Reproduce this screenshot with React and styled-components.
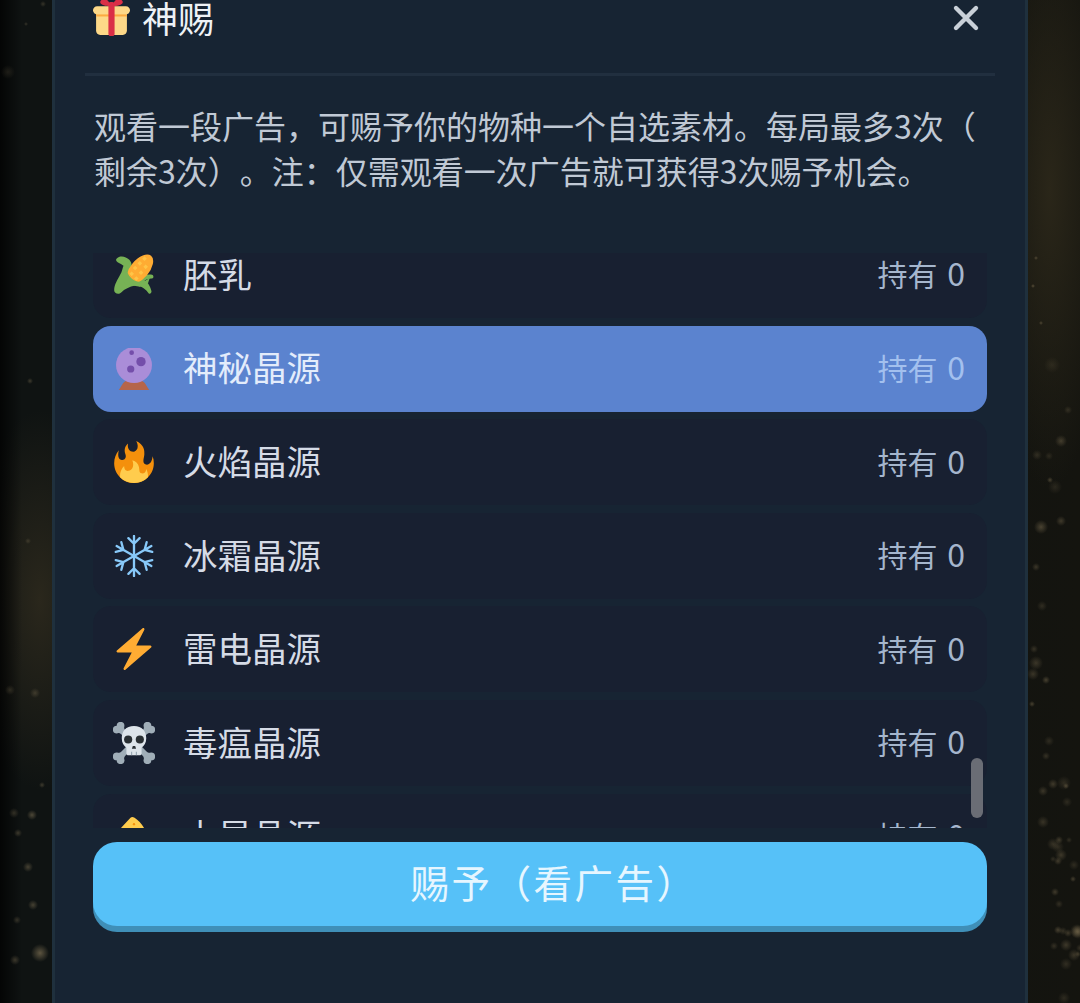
import React from "react";
import styled, { createGlobalStyle } from "styled-components";

const Global = createGlobalStyle`
  html, body { margin: 0; height: 100%; overflow: hidden; background: #0a0c0b; }
  #root { height: 100%; }
`;

const leftSpecks = [
  [32, 815, 5, 0.4], [18, 833, 4, 0.3], [28, 867, 5, 0.35], [33, 905, 5, 0.35], [40, 953, 9, 0.5],
  [15, 960, 5, 0.3], [14, 813, 5, 0.25], [17, 920, 4, 0.25], [42, 785, 3, 0.3], [30, 381, 3, 0.3],
  [28, 541, 3, 0.22], [10, 690, 5, 0.2], [35, 693, 5, 0.25], [8, 72, 7, 0.14], [26, 24, 2, 0.25], [43, 4, 3, 0.25],
];

const rightSpecks = [];
let seed = 7;
const rand = () => {
  seed = (seed * 16807) % 2147483647;
  return seed / 2147483647;
};
for (let i = 0; i < 46; i += 1) {
  const y = 410 + rand() * 590;
  const curve = y < 640 ? 1055 - (y - 410) * 0.07 : 1040 + (y - 640) * 0.09;
  rightSpecks.push([Math.round(curve + (rand() - 0.5) * 30), Math.round(y), 3 + Math.round(rand() * 4), 0.14 + rand() * 0.22]);
}
[[1036, 258, 2, 0.35], [1033, 286, 2, 0.4], [1041, 323, 2, 0.35], [1052, 365, 8, 0.12]].forEach((s) => rightSpecks.push(s));

const speckLayers = [...leftSpecks, ...rightSpecks]
  .map(([x, y, r, a]) => `radial-gradient(circle ${r}px at ${x}px ${y}px, rgba(170,150,110,${a}), rgba(170,150,110,0))`)
  .join(", ");

const Backdrop = styled.div`
  height: 100%;
  display: flex;
  justify-content: center;
  overflow: hidden;
  background:
    ${speckLayers},
    linear-gradient(90deg, rgba(0, 0, 0, 0.75) 0, rgba(0, 0, 0, 0) 22px),
    radial-gradient(ellipse 70px 190px at 40px 600px, #2a271c, rgba(42, 39, 28, 0)),
    radial-gradient(ellipse 60px 300px at 1050px 190px, #2a2619, rgba(42, 38, 25, 0)),
    linear-gradient(90deg, #0f1312 0, #0f1312 50%, #14140f 100%);
`;

const Panel = styled.main`
  box-sizing: border-box;
  width: 976px;
  height: 100%;
  padding: 0 30px;
  background: #172433;
  border-left: 3px solid #1f303d;
  border-right: 3px solid #1f303d;
  font-family: "Noto Sans CJK SC", "Noto Sans", sans-serif;
  text-spacing-trim: space-all;
  display: flex;
  flex-direction: column;
  overflow: hidden;
`;

const Header = styled.header`
  height: 73px;
  flex: none;
  display: flex;
  align-items: flex-start;
  justify-content: space-between;
  border-bottom: 3px solid #212f3f;
  padding: 0 15px 0 8px;
`;

const TitleWrap = styled.div`
  display: flex;
  align-items: center;
  gap: 12px;
  height: 36px;
`;

const Title = styled.h1`
  margin: -2px 0 0;
  font-size: 36px;
  line-height: 36px;
  font-weight: 400;
  color: #eef2f6;
`;

const CloseIcon = styled.svg`
  width: 28px;
  height: 28px;
  margin-top: 4px;
  display: block;
`;

const Body = styled.div`
  margin: 0 8px;
  display: flex;
  flex-direction: column;
  flex: none;
`;

const Description = styled.p`
  margin: 27px 0 0;
  font-size: 32px;
  line-height: 44.6px;
  color: #c0c9d5;
  padding-left: 1px;
  white-space: nowrap;
`;

const ListFrame = styled.div`
  position: relative;
  margin-top: 60.8px;
  height: 575px;
  overflow: hidden;
`;

const List = styled.ul`
  list-style: none;
  margin: -21px 0 0;
  padding: 0;
  display: flex;
  flex-direction: column;
  gap: 7.6px;
`;

const Row = styled.li`
  height: 86px;
  flex: none;
  box-sizing: border-box;
  display: flex;
  align-items: center;
  padding: 0 22px 0 20px;
  border-radius: 18px;
  background: ${(p) => (p.$active ? "#5b83cf" : "#182031")};
`;

const RowIcon = styled.svg`
  width: 42px;
  height: 42px;
  flex: none;
  display: block;
`;

const RowName = styled.span`
  margin-left: 28px;
  flex: 1;
  font-size: 34.5px;
  line-height: 1;
  padding-bottom: 4px;
  color: ${(p) => (p.$active ? "#e3ecfb" : "#d5dbe6")};
`;

const RowCount = styled.span`
  font-size: 30px;
  line-height: 1;
  padding-bottom: 5px;
  word-spacing: 3px;
  color: ${(p) => (p.$active ? "#a3c0ee" : "#a5b6cd")};
`;

const CountValue = styled.span`
  display: inline-block;
  font-size: 32px;
`;

const ScrollThumb = styled.div`
  position: absolute;
  right: 4px;
  top: 505px;
  width: 12px;
  height: 60px;
  border-radius: 6px;
  background: #6a6d75;
`;

const GrantButton = styled.button`
  margin-top: 14px;
  height: 84px;
  border: 0;
  padding: 0 0 6px 28px;
  border-radius: 24px;
  background: #56c1f8;
  box-shadow: 0 6px 0 #3f8fb8;
  color: #e6f6ff;
  font-family: inherit;
  font-size: 38.5px;
  font-weight: 400;
  line-height: 1;
  letter-spacing: 2.5px;
  text-spacing-trim: space-all;
`;

const Svg36 = ({ children }) => <RowIcon viewBox="0 0 36 36">{children}</RowIcon>;

const GiftSvg = styled.svg`
  width: 37px;
  height: 37px;
  flex: none;
  display: block;
  margin-top: -2px;
`;

const Gift = () => (
  <GiftSvg viewBox="0 0 36 36">
    <path fill="#FDD888" d="M33 31c0 2.2-1.8 4-4 4H7c-2.2 0-4-1.8-4-4V14c0-2.2 1.8-4 4-4h22c2.2 0 4 1.8 4 4v17z" />
    <path fill="#FDD888" d="M36 11c0 2.2-1.8 4-4 4H4c-2.2 0-4-1.8-4-4s1.8-4 4-4h28c2.2 0 4 1.8 4 4z" />
    <path fill="#FCAB40" d="M3 15h30v2H3z" />
    <path fill="#DA2F47" d="M19 3h-2c-1.1 0-2 .9-2 2v29c0 1.1.9 2 2 2h2c1.1 0 2-.9 2-2V5c0-1.1-.9-2-2-2z" />
    <path fill="#DA2F47" d="M16 7c1.1 0 1.1-.9.6-2-.5-1.1-2.6-5-5.1-5-2.2 0-4.5 1.2-4.5 3 0 3.3 6.6 4 9 4zm4 0c-1.1 0-1.1-.9-.6-2 .5-1.1 2.6-5 5.1-5 2.2 0 4.5 1.2 4.5 3 0 3.3-6.6 4-9 4z" />
  </GiftSvg>
);

const Corn = () => (
  <Svg36>
    <path fill="#77B255" d="M3 4c3-3 8-2 11 1 2 2 2 5 2 5l8 9c3-1 7-2 10-1 1 1 1 3-1 3-3 0-5 1-6 2 3 1 5 5 6 9 0 2-2 3-3 1-3-4-7-6-11-6-5 1-9 3-12 6-2 2-6 1-6-2 0-5 3-9 5-13 2-3 2-6 3-8-1-1-3-2-5-3-1-1-2-2-1-3z" />
    <ellipse cx="23" cy="13" rx="15" ry="8" fill="#FFAC33" transform="rotate(-50 23 13)" />
    <path fill="#FFCC4D" opacity=".75" d="M14 17l2-2 2 2-2 2zm3-5l2-2 2 2-2 2zm4-4l2-2 2 2-2 2zm4-4l2-2 2 2-2 2zM18 21l2-2 2 2-2 2zm4-5l2-2 2 2-2 2zm4-5l2-2 2 2-2 2z" />
    <path fill="#77B255" d="M12 15c2 5 5 8 11 9 3 0 7-2 9-5l-2 6-7 3-12-2-4-5z" />
  </Svg36>
);

const CrystalBall = () => (
  <Svg36>
    <path fill="#B5654A" d="M5 36l3.500-5.500c.8-1.300 2-2.500 4-2.500h11c2 0 3.200 1.200 4 2.500L31 36H5z" />
    <circle cx="18" cy="14.600" r="15.400" fill="#AA8DD8" />
    <circle cx="24" cy="11.700" r="4" fill="#744EAA" />
    <circle cx="15.200" cy="18" r="3.100" fill="#744EAA" />
    <circle cx="16" cy="4" r="2" fill="#744EAA" />
  </Svg36>
);

const Fire = () => (
  <Svg36>
    <path fill="#F4900C" d="M35 19c0-2.062-.367-4.039-1.04-5.868-.46 5.389-3.333 8.157-6.335 6.868-2.812-1.208-.917-5.917-.777-8.164.236-3.809-.012-8.169-6.931-11.794 2.875 5.5.333 8.917-2.333 9.125-2.958.231-5.667-2.542-4.667-7.042-3.238 2.386-3.332 6.402-2.333 9 1.042 2.708-.042 4.958-2.583 5.208-2.84.28-4.418-3.041-2.963-8.333C2.52 10.965 1 14.805 1 19c0 9.389 7.611 17 17 17s17-7.611 17-17z" />
    <path fill="#FFCC4D" d="M28.394 23.999c.148 3.084-2.561 4.293-4.019 3.709-2.106-.843-1.541-2.291-2.083-5.291s-2.625-5.083-5.708-6c2.25 6.333-1.247 8.667-3.08 9.084-1.872.426-3.753-.001-3.968-4.007C7.352 23.668 6 26.676 6 30c0 .368.023.73.055 1.09C9.125 34.124 13.342 36 18 36s8.875-1.876 11.945-4.91c.032-.36.055-.722.055-1.09 0-2.187-.584-4.236-1.606-6.001z" />
  </Svg36>
);

const SnowArm = ({ angle }) => (
  <path transform={`rotate(${angle} 18 18)`} d="M18 18V.8M18 7.500l-4.800-4.800M18 7.500l4.800-4.800" />
);

const Snow = () => (
  <Svg36>
    <g fill="none" stroke="#88C9F9" strokeWidth="2" strokeLinecap="round">
      {[0, 60, 120, 180, 240, 300].map((a) => <SnowArm key={a} angle={a} />)}
    </g>
  </Svg36>
);

const Bolt = () => (
  <Svg36>
    <path fill="#FFAC33" d="M32.938 15.651C32.792 15.26 32.418 15 32 15H19.925L26.89 1.458c.219-.426.106-.947-.271-1.243C26.437.071 26.218 0 26 0c-.233 0-.466.082-.653.243L18 6.588 3.347 19.243c-.316.273-.43.714-.284 1.105S3.582 21 4 21h12.075L9.11 34.542c-.219.426-.106.947.271 1.243.182.144.401.215.619.215.233 0 .466-.082.653-.243L18 29.412l14.653-12.655c.317-.273.43-.714.285-1.106z" />
  </Svg36>
);

const BoneEnd = () => (
  <g fill="#A0AEB8">
    <circle cx="3.200" cy="6.500" r="3.300" />
    <circle cx="6.500" cy="3.200" r="3.300" />
    <circle cx="6.500" cy="6.500" r="3.300" />
  </g>
);

const Skull = () => (
  <Svg36>
    <path stroke="#A0AEB8" strokeWidth="5" d="M6 6l24 24M30 6L6 30" />
    <BoneEnd />
    <g transform="matrix(-1 0 0 1 36 0)"><BoneEnd /></g>
    <g transform="matrix(1 0 0 -1 0 36)"><BoneEnd /></g>
    <g transform="rotate(180 18 18)"><BoneEnd /></g>
    <path fill="#DDE4EA" d="M18 3.500C11 3.500 7.500 8 7.500 14c0 4 1.800 6.500 4 8v5c0 1 .8 1.500 1.500 1.500h10c.7 0 1.500-.5 1.500-1.500v-5c2.200-1.500 4-4 4-8C28.500 8 25 3.500 18 3.500z" />
    <circle cx="13" cy="15" r="3.500" fill="#292F33" />
    <circle cx="23" cy="15" r="3.500" fill="#292F33" />
    <path fill="#292F33" d="M17 20.500h2l.8 2.500h-3.600z" />
    <path stroke="#8899A6" strokeWidth=".8" d="M16 25.500v3M20 25.500v3" />
  </Svg36>
);

const Cheese = () => (
  <Svg36>
    <path fill="#FFCC4D" d="M7 10L15 1.500c1-1 2-1 3.500 0 3 2 6 5 8 8.500v1H7z" />
    <path fill="#F4900C" d="M7 10.500h19.500V36H7z" />
    <circle cx="18" cy="7" r="1" fill="#F4900C" />
  </Svg36>
);

const items = [
  { name: "胚乳", Icon: Corn },
  { name: "神秘晶源", Icon: CrystalBall, active: true },
  { name: "火焰晶源", Icon: Fire },
  { name: "冰霜晶源", Icon: Snow },
  { name: "雷电晶源", Icon: Bolt },
  { name: "毒瘟晶源", Icon: Skull },
  { name: "土星晶源", Icon: Cheese },
];

export default function App() {
  return (
    <Backdrop>
      <Global />
      <Panel>
        <Header>
          <TitleWrap>
            <Gift />
            <Title>神赐</Title>
          </TitleWrap>
          <CloseIcon viewBox="0 0 28 28">
            <path d="M4 4l20 20M24 4L4 24" stroke="#c9d0d8" strokeWidth="4.400" strokeLinecap="round" />
          </CloseIcon>
        </Header>
        <Body>
          <Description>
            观看一段广告，可赐予你的物种一个自选素材。每局最多3次（
            <br />
            剩余3次）。注：仅需观看一次广告就可获得3次赐予机会。
          </Description>
          <ListFrame>
            <List>
              {items.map(({ name, Icon, active }) => (
                <Row key={name} $active={active}>
                  <Icon />
                  <RowName $active={active}>{name}</RowName>
                  <RowCount $active={active}>持有 <CountValue>0</CountValue></RowCount>
                </Row>
              ))}
            </List>
            <ScrollThumb />
          </ListFrame>
          <GrantButton>赐予（看广告）</GrantButton>
        </Body>
      </Panel>
    </Backdrop>
  );
}
